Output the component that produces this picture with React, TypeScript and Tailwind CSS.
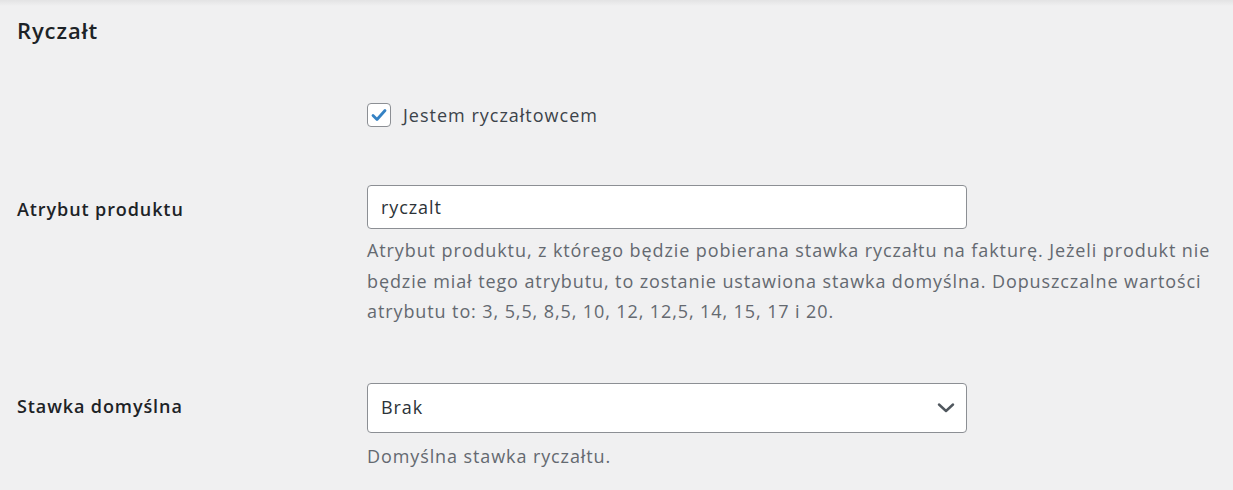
import React from "react"

const descLines = [
    "Atrybut produktu, z którego będzie pobierana stawka ryczałtu na fakturę. Jeżeli produkt nie",
    "będzie miał tego atrybutu, to zostanie ustawiona stawka domyślna. Dopuszczalne wartości",
    "atrybutu to: 3, 5,5, 8,5, 10, 12, 12,5, 14, 15, 17 i 20.",
]

function Chevron() {
    return (
        <svg width="18" height="10" viewBox="0 0 18 10" fill="none">
            <path d="M2 1.5 L9 8 L16 1.5" stroke="#50575e" strokeWidth="2.4" strokeLinecap="round" strokeLinejoin="round" />
        </svg>
    )
}

export default function App() {
    return (
        <div className="min-h-[490px] w-full bg-[#f0f0f1] font-['Open_Sans',sans-serif] text-[#1d2327]">
            <div className="h-[6px] bg-gradient-to-b from-[#e3e3e4] to-[#f0f0f1]" />
            <h2 className="mt-[9px] pl-[17px] text-[22px] font-semibold leading-[30px] tracking-[0.9px]">Ryczałt</h2>

            {/* checkbox row */}
            <div className="mt-[58px] flex">
                <div className="w-[367px] shrink-0" />
                <label className="flex items-center">
                    <span className="flex h-[24px] w-[24px] items-center justify-center rounded-[4px] border border-[#8c8f94] bg-white">
                        <svg width="16" height="14" viewBox="0 0 16 14" fill="none">
                            <path d="M2 7.5 L6 11.5 L14 2.5" stroke="#3582c4" strokeWidth="2.8" strokeLinecap="round" strokeLinejoin="round" />
                        </svg>
                    </span>
                    <span className="ml-[12px] text-[18px] leading-[24px] tracking-[1px] text-[#3c434a]">Jestem ryczałtowcem</span>
                </label>
            </div>

            {/* attribute row */}
            <div className="mt-[58px] flex">
                <div className="w-[367px] shrink-0 pl-[17px] pt-[12px] text-[18px] font-semibold leading-[24px] tracking-[0.9px]">Atrybut produktu</div>
                <div className="flex flex-col">
                    <div className="flex h-[44px] w-[600px] items-center rounded-[4px] border border-[#8c8f94] bg-white px-[13px] text-[18px] tracking-[0.9px] text-[#2c3338]">
                        ryczalt
                    </div>
                    <p className="mt-[6px] text-[18px] leading-[30.5px] tracking-[0.9px] text-[#646970]">
                        {descLines.map((l) => (
                            <span key={l} className="block whitespace-nowrap">{l}</span>
                        ))}
                    </p>
                </div>
            </div>

            {/* default rate row */}
            <div className="mt-[56px] flex">
                <div className="w-[367px] shrink-0 pl-[17px] pt-[11px] text-[18px] font-semibold leading-[24px] tracking-[0.9px]">Stawka domyślna</div>
                <div className="flex flex-col">
                    <div className="flex h-[50px] w-[600px] items-center justify-between rounded-[4px] border border-[#8c8f94] bg-white pl-[13px] pr-[11px] text-[18px] tracking-[0.9px] text-[#2c3338]">
                        <span>Brak</span>
                        <Chevron />
                    </div>
                    <p className="mt-[8px] text-[18px] leading-[30px] tracking-[0.9px] text-[#646970]">Domyślna stawka ryczałtu.</p>
                </div>
            </div>
        </div>
    )
}
